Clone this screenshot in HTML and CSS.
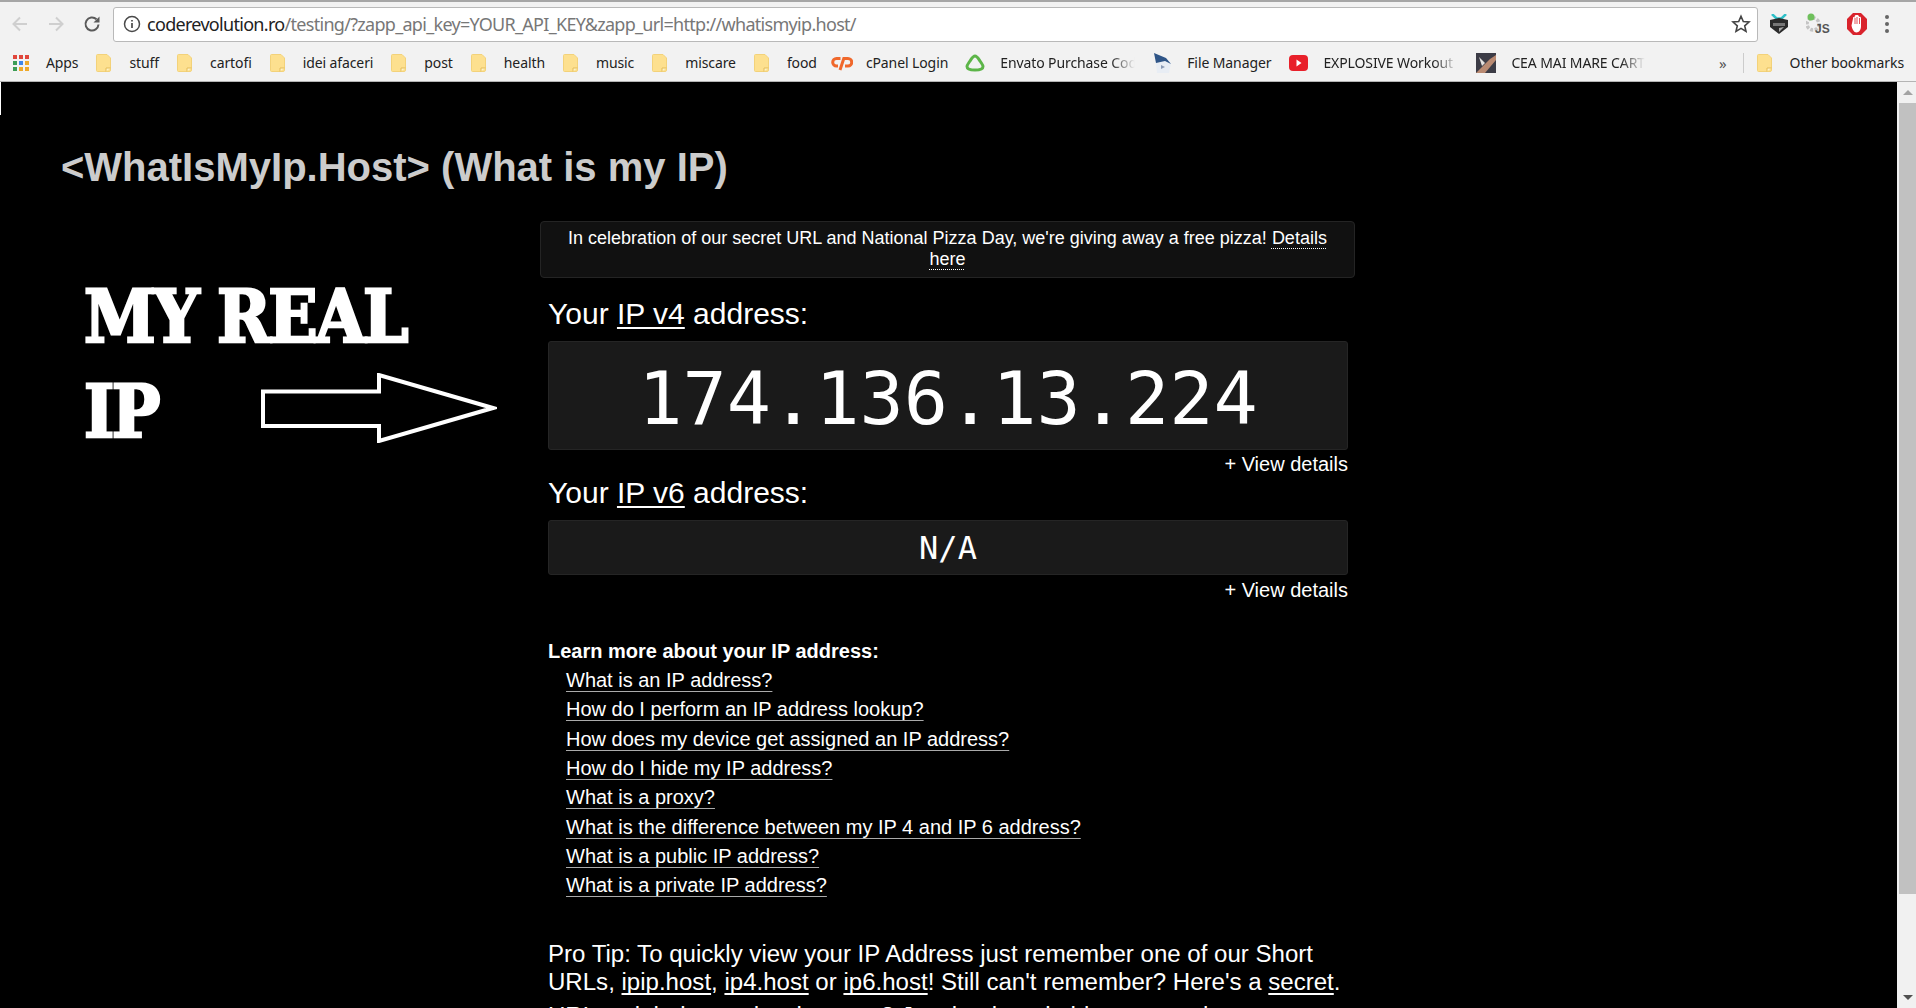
FILE: index.html
```html
<!DOCTYPE html>
<html lang="en">
<head>
<meta charset="utf-8">
<title>WhatIsMyIp.Host</title>
<link rel="stylesheet" href="styles.css">
</head>
<body>
<svg class="defs" width="0" height="0" aria-hidden="true">
  <symbol id="folder" viewBox="0 0 15 18">
    <path d="M1.5.5h9.5l3.5 3.500v12a1.500 1.500 0 0 1-1.500 1.500h-11.500a1 1 0 0 1-1-1v-15a1 1 0 0 1 1-1z" fill="#fde08f" stroke="#f3d27a"/>
    <path d="M10 17.500v-3.500h4.500" fill="#fff3c8" stroke="#e4bd5a"/>
  </symbol>
</svg>
<header class="chrome">
  <div class="tabstrip"></div>
  <div class="toolbar">
    <div class="nav">
      <svg width="20" height="20" viewBox="0 0 20 20"><path d="M17 10H4M10 3.500L3.500 10l6.500 6.500" fill="none" stroke="#cfcfcf" stroke-width="2"/></svg>
      <svg width="20" height="20" viewBox="0 0 20 20"><path d="M3 10h13M10 3.500l6.500 6.500-6.500 6.500" fill="none" stroke="#cfcfcf" stroke-width="2"/></svg>
      <svg width="20" height="20" viewBox="0 0 20 20"><path d="M16.500 10.500a6.500 6.500 0 1 1-2-5.200" fill="none" stroke="#5a5a5a" stroke-width="2"/><path d="M17.500 2.500v6h-6z" fill="#5a5a5a"/></svg>
    </div>
    <div class="omnibox">
      <svg class="info" width="18" height="18" viewBox="0 0 18 18"><circle cx="9" cy="9" r="7.500" fill="none" stroke="#4a4a4a" stroke-width="1.500"/><path d="M9 8v5M9 5v1.600" stroke="#4a4a4a" stroke-width="1.700" fill="none"/></svg>
      <span class="url"><span class="url-host">coderevolution.ro</span>/testing/?zapp_api_key=YOUR_API_KEY&amp;zapp_url=http://whatismyip.host/</span>
      <svg class="star" width="20" height="20" viewBox="0 0 20 20"><path d="M10 2.200l2.300 5.300 5.700.5-4.300 3.800 1.300 5.600-5-3-5 3 1.300-5.600L2 8l5.700-.5z" fill="none" stroke="#444" stroke-width="1.600"/></svg>
    </div>
    <div class="exts">
      <svg width="20" height="21" viewBox="0 0 20 21"><path d="M3 0l4.500 4.500h5L17 0" fill="none" stroke="#2fc0c8" stroke-width="2.500"/><path d="M1 6l9-2 9 2v7l-9 7-9-7z" fill="#2b2b2b"/><path d="M4 9h12v3H4z" fill="#777"/><path d="M10 14l5-1-5 5z" fill="#aaa"/></svg>
      <svg width="24" height="22" viewBox="0 0 24 22"><circle cx="7" cy="11" r="6" fill="none" stroke="#c4c4c4" stroke-width="3.500" stroke-dasharray="3 1.500"/><circle cx="5" cy="4" r="3.500" fill="#6fc05c"/><text class="js-mark" x="9" y="20">JS</text></svg>
      <svg width="20" height="22" viewBox="0 0 20 22"><path d="M6 0h8l6 6v10l-6 6H6l-6-6V6z" fill="#d9232c"/><path d="M6 5.500c0-2 1-1.500 1.500-1 0-2.500 1.500-2.500 2.500-2.500s2 .5 2 2c1-.5 2-.5 2 1.500v8c0 3-2 6-4.500 6S5 16 4.500 12.500z" fill="#fff"/><path d="M8 5v6M10 4v7M12.500 5v6" stroke="#d9232c" stroke-width=".8"/></svg>
      <svg width="6" height="20" viewBox="0 0 6 20"><circle cx="3" cy="3" r="2" fill="#666"/><circle cx="3" cy="10" r="2" fill="#666"/><circle cx="3" cy="17" r="2" fill="#666"/></svg>
    </div>
  </div>
  <nav class="bookmarks">
    <a class="bm bm-apps"><span class="apps"><i class="r"></i><i class="r"></i><i class="r"></i><i class="g"></i><i class="b"></i><i class="y"></i><i class="g"></i><i class="y"></i><i class="y"></i></span>Apps</a>
    <a class="bm"><svg class="fold"><use href="#folder"/></svg>stuff</a>
    <a class="bm"><svg class="fold"><use href="#folder"/></svg>cartofi</a>
    <a class="bm"><svg class="fold"><use href="#folder"/></svg>idei afaceri</a>
    <a class="bm"><svg class="fold"><use href="#folder"/></svg>post</a>
    <a class="bm"><svg class="fold"><use href="#folder"/></svg>health</a>
    <a class="bm"><svg class="fold"><use href="#folder"/></svg>music</a>
    <a class="bm"><svg class="fold"><use href="#folder"/></svg>miscare</a>
    <a class="bm bm-food"><svg class="fold"><use href="#folder"/></svg>food</a>
    <a class="bm bm-tight bm-cp"><svg width="22" height="16" viewBox="0 0 22 16"><path d="M9.500 3.500H5.500a3.800 3.800 0 0 0 0 7.600h1.500" fill="none" stroke="#f0682c" stroke-width="3"/><path d="M9 15l3.800-11.500H17a3.500 3.500 0 0 1 0 7.500h-3" fill="none" stroke="#f0682c" stroke-width="3"/></svg>cPanel Login</a>
    <a class="bm bm-tight"><svg width="20" height="18" viewBox="0 0 20 18"><path d="M10 2c2 0 3 2 5 5s3 4 3 5.500c0 2-2 3.500-8 3.500s-8-1.500-8-3.500C2 11 3 10 5 7s3-5 5-5z" fill="none" stroke="#5cb548" stroke-width="3"/></svg><span class="fade fade-env">Envato Purchase Code</span></a>
    <a class="bm bm-tight"><svg width="19" height="22" viewBox="0 0 19 22"><path d="M2 2l13 6 3 3-2 10H4z" fill="#e8edf4"/><path d="M1 1l12 5 5 6-6-3-9 2z" fill="#2f5587"/><path d="M8 13l4 2-4 2z" fill="#8a9ab5"/></svg>File Manager</a>
    <a class="bm bm-tight"><svg width="19" height="16" viewBox="0 0 19 16"><rect width="19" height="16" rx="4" fill="#e8202a"/><path d="M7.500 4.500l5 3.500-5 3.500z" fill="#fff"/></svg><span class="fade fade-yt">EXPLOSIVE Workout</span></a>
    <a class="bm bm-tight"><svg width="20" height="20" viewBox="0 0 20 20"><rect width="20" height="20" fill="#3c3c46"/><path d="M0 20L14 6l6-4v5L9 20z" fill="#b98a72"/><path d="M3 4l6 6-3 3z" fill="#e5e2e0"/></svg><span class="fade fade-cea">CEA MAI MARE CARTE</span></a>
    <div class="bm-end">
      <span class="more">»</span>
      <span class="sep"></span>
      <a class="bm"><svg class="fold"><use href="#folder"/></svg>Other bookmarks</a>
    </div>
  </nav>
</header>
<div class="viewport">
  <main class="page">
    <h1 class="title">&lt;WhatIsMyIp.Host&gt; (What is my IP)</h1>
    <div class="columns">
      <aside class="callout">
        <div class="stencil">MY REAL</div>
        <div class="callout-row">
          <div class="stencil stencil-ip">IP</div>
          <svg class="arrow" width="236" height="70" viewBox="0 0 236 70"><path d="M2 18.500h116V2l114 33-114 33V53H2z" fill="none" stroke="#fff" stroke-width="4"/></svg>
        </div>
      </aside>
      <section class="content">
        <div class="notice">In celebration of our secret URL and National Pizza Day, we're giving away a free pizza! <a class="dotted">Details here</a></div>
        <div class="inner">
          <h2 class="ip-label ip-label-first">Your <a class="strong-link">IP v4</a> address:</h2>
          <div class="ip-box ip-box-large">174.136.13.224</div>
          <div class="details">+ View details</div>
          <h2 class="ip-label">Your <a class="strong-link">IP v6</a> address:</h2>
          <div class="ip-box ip-box-small">N/A</div>
          <div class="details details-last">+ View details</div>
          <h3 class="learn">Learn more about your IP address:</h3>
          <ul class="links">
            <li><a>What is an IP address?</a></li>
            <li><a>How do I perform an IP address lookup?</a></li>
            <li><a>How does my device get assigned an IP address?</a></li>
            <li><a>How do I hide my IP address?</a></li>
            <li><a>What is a proxy?</a></li>
            <li><a>What is the difference between my IP 4 and IP 6 address?</a></li>
            <li><a>What is a public IP address?</a></li>
            <li><a>What is a private IP address?</a></li>
          </ul>
          <p class="tip">Pro Tip: To quickly view your IP Address just remember one of our Short URLs, <a class="strong-link">ipip.host</a>, <a class="strong-link">ip4.host</a> or <a class="strong-link">ip6.host</a>! Still can't remember? Here's a <a class="strong-link">secret</a>.</p>
          <p class="tip tip-next">URLs might be too hard to type? Just bookmark this page and you are set.</p>
        </div>
      </section>
    </div>
  </main>
  <div class="scrollbar">
    <div class="sb-btn"><span class="tri-up"></span></div>
    <div class="sb-track"><div class="sb-thumb"></div></div>
    <div class="sb-btn"><span class="tri-down"></span></div>
  </div>
</div>
</body>
</html>
```

FILE: styles.css
```css
html, body { margin: 0; height: 100%; overflow: hidden; }
body { display: flex; flex-direction: column; background: #000; font-family: "Liberation Sans", Arial, sans-serif; color: #fff; }
.defs { position: absolute; }

.chrome { flex: none; height: 82px; background: #f2f2f2; border-bottom: 1px solid #b4b4b4; box-sizing: border-box; color: #222; }
.tabstrip { height: 2px; background: #a6a6a6; }
.toolbar { display: flex; align-items: center; height: 40px; padding-top: 4px; box-sizing: border-box; }
.nav { display: flex; align-items: center; gap: 16px; width: 113px; padding-left: 10px; box-sizing: border-box; flex: none; }
.omnibox { width: 1645px; height: 35px; flex: none; box-sizing: border-box; background: #fff; border: 1px solid #b9b9b9; border-radius: 3px; display: flex; align-items: center; padding: 0 6px 0 9px; }
.info { flex: none; margin-right: 6px; }
.url { font-family: "Noto Sans", sans-serif; font-size: 18px; letter-spacing: -0.7px; color: #777; white-space: nowrap; flex: 1; }
.url-host { color: #222; }
.star { flex: none; }
.exts { display: flex; align-items: center; gap: 17px; padding-left: 11px; }
.js-mark { font: bold 12px "Liberation Sans", sans-serif; fill: #555; }

.bookmarks { display: flex; align-items: center; height: 39px; padding: 2px 0 0 13px; box-sizing: border-box; font-family: "Noto Sans", sans-serif; font-size: 14px; letter-spacing: -0.1px; white-space: nowrap; }
.bm { display: flex; align-items: center; gap: 18px; margin-right: 18px; }
.bm-apps { gap: 17px; }
.bm-food { margin-right: 14px; }
.bm-tight { gap: 15px; margin-right: 18px; }
.bm-cp { gap: 13px; margin-right: 17px; }
.fold { width: 15px; height: 18px; flex: none; }
.apps { display: grid; grid-template-columns: repeat(3, 4px); grid-auto-rows: 4px; gap: 2px; }
.apps i { display: block; }
.apps .r { background: #e0463c; }
.apps .g { background: #3c9c56; }
.apps .b { background: #3f86e8; }
.apps .y { background: #eea92a; }
.fade { display: block; overflow: hidden; -webkit-mask-image: linear-gradient(to right, #000 82%, transparent); mask-image: linear-gradient(to right, #000 82%, transparent); }
.fade-env { width: 135px; }
.fade-yt { width: 135px; }
.fade-cea { width: 134px; }
.bm-end { margin-left: auto; display: flex; align-items: center; }
.bm-end .bm { margin-right: 12px; }
.more { font-size: 15px; color: #555; margin-right: 16px; }
.sep { width: 1px; height: 20px; background: #ccc; margin-right: 13px; }

.viewport { flex: 1; display: flex; min-height: 0; }
.page { flex: 1; min-width: 0; background: #000; padding: 63px 0 0 61px; box-sizing: border-box; overflow: hidden; position: relative; }
.page::before { content: ""; position: absolute; left: 0; top: 0; width: 1px; height: 33px; background: #fff; }
.title { margin: 0 0 32px; font-size: 40px; line-height: 44px; font-weight: 700; color: #ccc; }
.columns { display: flex; align-items: flex-start; }
.callout { width: 479px; flex: none; padding: 48px 0 0 23px; box-sizing: border-box; }
.stencil { font-family: "DejaVu Serif", serif; font-stretch: condensed; font-weight: 700; font-size: 72px; line-height: 95px; letter-spacing: -2.500px; color: #fff; white-space: nowrap; -webkit-text-stroke: 2.500px #fff; }
.callout-row { display: flex; align-items: center; }
.stencil-ip { width: 177px; }
.arrow { flex: none; margin: -7px 0 0; }

.content { width: 815px; flex: none; }
.notice { background: #111; border: 1px solid #242424; border-radius: 4px; padding: 6px 20px 7px; font-size: 18px; line-height: 21px; text-align: center; }
.dotted { text-decoration: underline dotted 1px; text-underline-offset: 4px; text-decoration-skip-ink: none; }
.inner { padding: 0 7px 0 8px; }
.ip-label { margin: 0 0 10px; font-size: 30px; line-height: 35px; font-weight: 400; }
.ip-label-first { margin-top: 18px; }
.strong-link { text-decoration: underline 2px; text-underline-offset: 3px; text-decoration-skip-ink: none; }
.ip-box { background: #1a1a1a; border: 1px solid #252525; border-radius: 3px; box-sizing: border-box; text-align: center; font-family: "DejaVu Sans Mono", monospace; }
.ip-box-large { height: 109px; font-size: 73.500px; line-height: 113px; }
.ip-box-small { height: 55px; font-size: 32px; line-height: 55px; }
.details { margin: 3px 0 -1px; text-align: right; font-size: 20px; line-height: 23px; }
.details-last { margin: 4px 0 0; }
.learn { margin: 37px 0 3px; font-size: 20px; line-height: 24px; font-weight: 700; }
.links { margin: 0; padding: 0 0 0 18px; list-style: none; font-size: 20px; line-height: 29.330px; }
.links a { text-decoration: underline 1px #aaa; text-underline-offset: 4px; text-decoration-skip-ink: none; }
.tip { margin: 39px 0 0; font-size: 24.050px; line-height: 28.500px; }
.tip-next { margin-top: 5px; }

.scrollbar { flex: none; width: 19px; background: #f1f1f1; display: flex; flex-direction: column; }
.sb-btn { flex: none; height: 21px; display: flex; align-items: center; justify-content: center; padding-left: 2px; }
.sb-track { flex: 1; display: flex; padding-left: 2px; }
.sb-thumb { flex: 1; margin-bottom: 93px; background: #c1c1c1; }
.tri-up { width: 0; height: 0; border-left: 5px solid transparent; border-right: 5px solid transparent; border-bottom: 5px solid #a3a3a3; }
.tri-down { width: 0; height: 0; border-left: 5px solid transparent; border-right: 5px solid transparent; border-top: 5px solid #505050; }
```
